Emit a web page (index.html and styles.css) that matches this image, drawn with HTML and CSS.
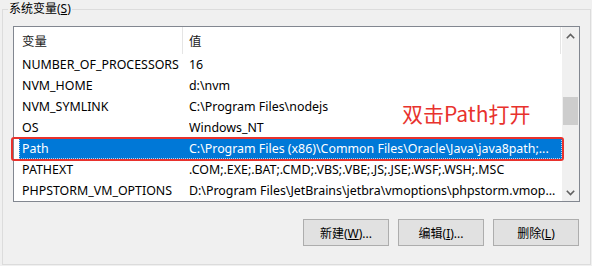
FILE: index.html
```html
<!DOCTYPE html>
<html lang="zh-CN">
<head>
<meta charset="utf-8">
<title>系统变量</title>
<link rel="stylesheet" href="styles.css">
</head>
<body>
<fieldset class="group">
  <legend class="group-title">系统变量(<u>S</u>)</legend>
  <div class="list-wrap">
    <div class="list">
      <div class="list-body">
        <div class="header">
          <div class="hcell c1">变量</div>
          <div class="hcell c2">值</div>
        </div>
        <div class="row"><div class="cell c1">NUMBER_OF_PROCESSORS</div><div class="cell c2">16</div></div>
        <div class="row"><div class="cell c1">NVM_HOME</div><div class="cell c2">d:\nvm</div></div>
        <div class="row"><div class="cell c1">NVM_SYMLINK</div><div class="cell c2">C:\Program Files\nodejs</div></div>
        <div class="row"><div class="cell c1">OS</div><div class="cell c2">Windows_NT</div></div>
        <div class="row selected"><div class="cell c1">Path</div><div class="cell c2">C:\Program Files (x86)\Common Files\Oracle\Java\java8path;...</div></div>
        <div class="row"><div class="cell c1">PATHEXT</div><div class="cell c2">.COM;.EXE;.BAT;.CMD;.VBS;.VBE;.JS;.JSE;.WSF;.WSH;.MSC</div></div>
        <div class="row"><div class="cell c1">PHPSTORM_VM_OPTIONS</div><div class="cell c2">D:\Program Files\JetBrains\jetbra\vmoptions\phpstorm.vmop...</div></div>
      </div>
      <div class="scrollbar">
        <div class="arrow">
          <svg width="9" height="6" viewBox="0 0 9 6"><path d="M0.8 5.2 L4.5 1.5 L8.2 5.2" fill="none" stroke="#606060" stroke-width="1.6"/></svg>
        </div>
        <div class="track"><div class="thumb"></div></div>
        <div class="arrow">
          <svg width="9" height="6" viewBox="0 0 9 6"><path d="M0.8 0.8 L4.5 4.5 L8.2 0.8" fill="none" stroke="#606060" stroke-width="1.6"/></svg>
        </div>
      </div>
    </div>
    <div class="callout-box"></div>
    <div class="callout-text">双击Path打开</div>
  </div>
  <div class="buttons">
    <button class="btn">新建(<u>W</u>)...</button>
    <button class="btn">编辑(<u>I</u>)...</button>
    <button class="btn">删除(<u>L</u>)</button>
  </div>
</fieldset>
</body>
</html>
```

FILE: styles.css
```css
html, body {
  margin: 0;
  padding: 0;
  background: #f0f0f0;
}
body {
  width: 592px;
  height: 266px;
  overflow: hidden;
  font-family: "Noto Sans", "Noto Sans CJK SC", sans-serif;
  font-size: 12px;
  color: #000;
}
.group {
  box-sizing: border-box;
  margin: 0 1px 0 2px;
  min-width: 0;
  height: 265px;
  border: 1px solid #dcdcdc;
  padding: 8px 10px 0 10px;
}
.group-title {
  margin-left: -5px;
  padding: 0 1px;
  line-height: 18px;
  font-size: 12px;
  color: #000;
}
.group-title u,
.btn u {
  text-decoration-thickness: 1px;
  text-underline-offset: 1px;
}
.list-wrap {
  position: relative;
}
.list {
  box-sizing: border-box;
  width: 567px;
  height: 176px;
  border: 1px solid #828790;
  background: #fff;
  display: flex;
}
.list-body {
  flex: 1;
  min-width: 0;
  overflow: hidden;
  font-size: 12.4px;
}
.header {
  display: flex;
  height: 27px;
  align-items: stretch;
}
.hcell {
  display: flex;
  align-items: center;
  color: #1a1a1a;
}
.hcell.c1 {
  box-sizing: border-box;
  width: 169px;
  padding-left: 8px;
  border-right: 1px solid #e5e5e5;
}
.hcell.c2 {
  flex: 1;
  padding-left: 6px;
  border-right: 1px solid #e5e5e5;
  margin-right: 1px;
}
.row {
  display: flex;
  height: 21px;
  align-items: center;
  margin-left: 5px;
  margin-right: 0;
  white-space: nowrap;
  color: #000;
}
.cell {
  overflow: hidden;
}
.cell.c1 {
  box-sizing: border-box;
  width: 170px;
  padding-left: 3px;
  flex: none;
}
.cell.c2 {
  flex: 1;
  min-width: 0;
}
.row.selected {
  background: #0078d7;
  color: #fff;
  outline: 1px dotted rgba(255, 255, 255, 0.7);
  outline-offset: -1px;
}
.scrollbar {
  width: 17px;
  flex: none;
  background: #f0f0f0;
  display: flex;
  flex-direction: column;
}
.arrow {
  height: 17px;
  display: flex;
  align-items: center;
  justify-content: center;
  flex: none;
}
.track {
  flex: 1;
  padding-top: 53px;
}
.thumb {
  width: 15px;
  margin-left: 1px;
  height: 28px;
  background: #cdcdcd;
}
.callout-box {
  position: absolute;
  left: -2px;
  top: 111px;
  width: 553px;
  height: 24px;
  box-sizing: border-box;
  border: 2px solid #e8322d;
  border-radius: 3px;
}
.callout-text {
  position: absolute;
  left: 389px;
  top: 72px;
  font-family: "Noto Sans CJK SC", sans-serif;
  font-size: 21px;
  line-height: 30px;
  color: #e8322d;
}
.buttons {
  display: flex;
  justify-content: flex-end;
  gap: 9px;
  margin-top: 17px;
  padding-right: 0;
  width: 566px;
}
.btn {
  box-sizing: border-box;
  width: 86px;
  height: 27px;
  border: 1px solid #adadad;
  background: #e1e1e1;
  font-family: "Noto Sans", "Noto Sans CJK SC", sans-serif;
  font-size: 12px;
  color: #000;
  padding: 0;
}
```
